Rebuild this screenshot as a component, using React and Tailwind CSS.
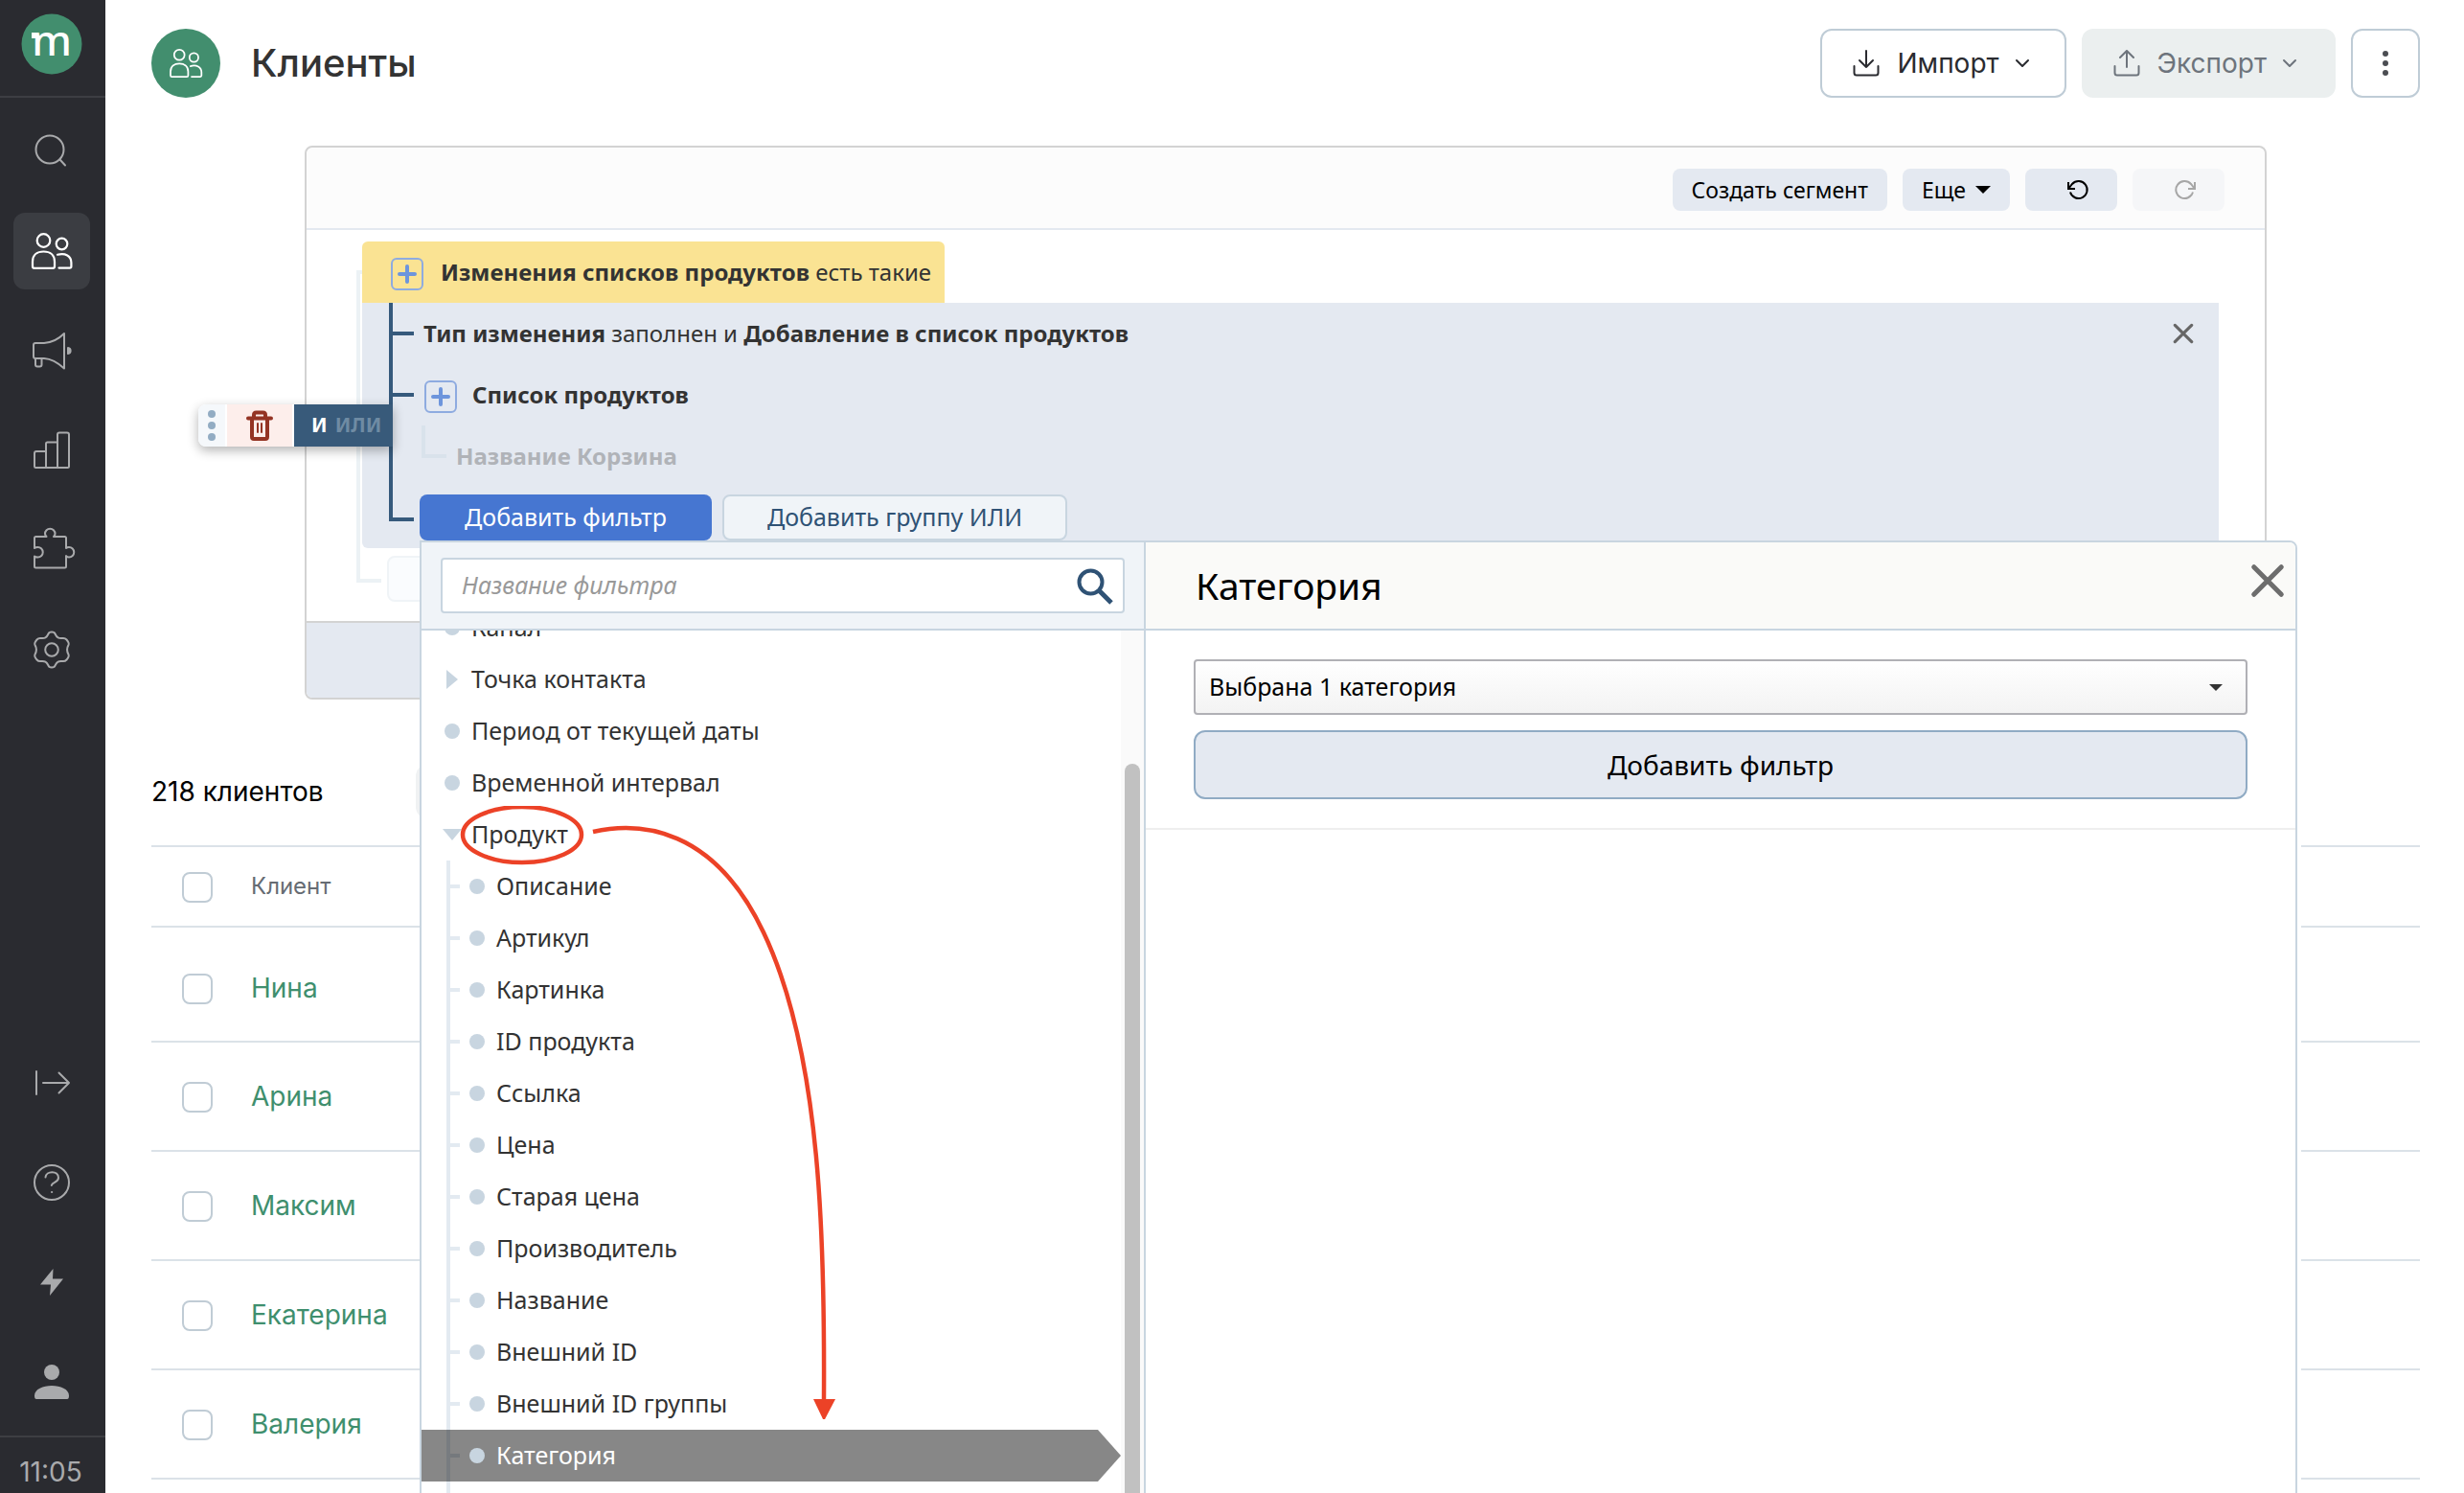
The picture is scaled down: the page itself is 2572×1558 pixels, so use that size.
import { useState } from 'react'

const stroke = {
  fill: 'none',
  stroke: 'currentColor',
  strokeWidth: 2,
  strokeLinecap: 'round',
  strokeLinejoin: 'round',
}

function UsersIcon({ className }) {
  return (
    <svg viewBox="0 0 44 40" className={className} {...stroke} strokeWidth={2.2}>
      <circle cx="13.5" cy="9" r="6.8" />
      <circle cx="32.5" cy="12.5" r="5.8" />
      <path d="M2 36V31C2 24 7 20.5 13.5 20.5S25 24 25 31V36Q25 37.8 23.2 37.8H3.8Q2 37.8 2 36Z" />
      <path d="M28 23.8C36 21.6 42.4 25 42.4 32V36Q42.4 37.6 40.8 37.6H29.5" />
    </svg>
  )
}

function SearchIcon() {
  return (
    <svg viewBox="0 0 40 40" className="size-10" {...stroke}>
      <circle cx="18" cy="18" r="14.5" />
      <path d="M28.5 28.5L34 34.5" />
    </svg>
  )
}

function MegaphoneIcon() {
  return (
    <svg viewBox="0 0 44 40" className="h-10 w-11" {...stroke}>
      <path d="M3 14Q3 12 5 12H14C22 11.5 29 8 35 2V38.500C29 33 22 28.500 14 28H5Q3 28 3 26Z" />
      <path d="M5 28V34.500Q5 36.500 7 36.500H9.500Q11.500 36.500 11.500 34.500V28" />
      <path d="M39 17C42.500 17.500 42.500 22.500 39 23Z" fill="currentColor" />
    </svg>
  )
}

function ChartIcon() {
  return (
    <svg viewBox="0 0 40 40" className="size-10" {...stroke}>
      <path d="M2 37V23Q2 21 4 21H14V13Q14 11.500 15.500 11.500H26V3.500Q26 1.500 28 1.500H36Q38 1.500 38 3.500V36.500Q38 38 36.500 38H3.500Q2 38 2 36.500" />
      <path d="M14 21V38M26 11V38" />
    </svg>
  )
}

function PuzzleIcon() {
  return (
    <svg viewBox="0 2 44 44" className="ml-1 size-11 overflow-visible" {...stroke}>
      <path d="M2 11.500Q2 10 3.500 10H14.500Q13 8.500 13 7A5 5 0 0 1 23.500 7Q23.500 8.500 22 10H33.500Q35 10 35 11.500V22Q36 21 38 21A5 5 0 0 1 38 31.500Q36 31.500 35 30V41Q35 42.500 33.500 42.500H3.500Q2 42.500 2 41V30.500Q3 31.500 5.500 31.500A5 5 0 0 0 5.500 21Q3 21 2 22Z" />
    </svg>
  )
}

function GearIcon() {
  return (
    <svg viewBox="0 0 40 40" className="size-10" {...stroke}>
      <circle cx="20" cy="20" r="6.800" />
      <path d="M16.500 3.500Q17 1.500 20 1.500T23.500 3.500C25.500 7.500 27 8.500 31.500 8Q34 7.800 35.500 9.500Q38.500 13 37.500 15C35.500 18.500 35.500 21.500 37.500 25Q38.500 27 35.500 30.500Q34 32.200 31.500 32C27 31.500 25.500 32.500 23.500 36.500Q23 38.500 20 38.500T16.500 36.500C14.500 32.500 13 31.500 8.500 32Q6 32.200 4.500 30.500Q1.500 27 2.500 25C4.500 21.500 4.500 18.500 2.500 15Q1.500 13 4.500 9.500Q6 7.800 8.500 8C13 8.500 14.500 7.500 16.500 3.500Z" />
    </svg>
  )
}

function ExpandIcon() {
  return (
    <svg viewBox="0 0 40 40" className="size-10" {...stroke}>
      <path d="M4 8V32M11 20H38M27.500 9.500L38 20L27.500 30.500" />
    </svg>
  )
}

function HelpIcon() {
  return (
    <svg viewBox="0 0 40 40" className="size-10" {...stroke}>
      <circle cx="20" cy="20" r="18" />
      <path d="M13.500 14.500C14 7.500 27 7 27 15C27 20 20.500 19.500 19.800 23" />
      <circle cx="20" cy="30" r="0.600" fill="currentColor" strokeWidth={1} />
    </svg>
  )
}

function BoltIcon() {
  return (
    <svg viewBox="0 0 40 40" className="size-10" fill="currentColor">
      <path d="M21.500 6L8 22.500H19L18 34L32 16.500H21Z" />
    </svg>
  )
}

function PersonIcon() {
  return (
    <svg viewBox="0 0 40 40" className="size-10" fill="currentColor">
      <circle cx="20" cy="10" r="8" />
      <path d="M2 34.500C2 27.500 11 24 20 24S38 27.500 38 34.500Q38 38 36 38H4Q2 38 2 34.500Z" />
    </svg>
  )
}

const topNav = [
  { label: 'Поиск', icon: SearchIcon },
  { label: 'Клиенты', icon: UsersIcon, active: true },
  { label: 'Кампании', icon: MegaphoneIcon },
  { label: 'Отчеты', icon: ChartIcon },
  { label: 'Интеграции', icon: PuzzleIcon },
  { label: 'Настройки', icon: GearIcon },
]

const bottomNav = [
  { label: 'Развернуть', icon: ExpandIcon },
  { label: 'Помощь', icon: HelpIcon },
  { label: 'Обновления', icon: BoltIcon },
  { label: 'Профиль', icon: PersonIcon },
]

const rootFilters = [
  { label: 'Канал', marker: 'dot' },
  { label: 'Точка контакта', marker: 'closed' },
  { label: 'Период от текущей даты', marker: 'dot' },
  { label: 'Временной интервал', marker: 'dot' },
  { label: 'Продукт', marker: 'open' },
]

const productFilters = [
  'Описание',
  'Артикул',
  'Картинка',
  'ID продукта',
  'Ссылка',
  'Цена',
  'Старая цена',
  'Производитель',
  'Название',
  'Внешний ID',
  'Внешний ID группы',
  'Категория',
]

const clients = ['Нина', 'Арина', 'Максим', 'Екатерина', 'Валерия']

function NavButton({ item }) {
  const Icon = item.icon
  return (
    <button
      aria-label={item.label}
      className={`flex size-20 items-center justify-center rounded-xl ${
        item.active ? 'bg-[#3b3d42] text-white' : 'text-[#a9aaac]'
      }`}
    >
      <Icon className="h-10 w-11" />
    </button>
  )
}

function Sidebar() {
  return (
    <nav className="flex h-full w-[110px] shrink-0 flex-col bg-[#2a2b30]">
      <div className="flex h-[102px] items-start border-b-2 border-[#3d3e43] pt-[14px] pl-[22px]">
        <svg viewBox="0 0 64 64" className="size-16 overflow-visible" role="img" aria-label="mindbox">
          <circle cx="32" cy="32" r="31.500" fill="#428e6e" />
          <rect x="11" y="20" width="6" height="6" fill="#fff" />
          <text x="32" y="44" textAnchor="middle" fill="#fff" className="font-['Noto_Sans',sans-serif] text-[44px] font-medium">
            m
          </text>
        </svg>
      </div>
      <div className="flex flex-1 flex-col items-start gap-6 pt-4 pl-[14px]">
        {topNav.map((item) => (
          <NavButton key={item.label} item={item} />
        ))}
      </div>
      <div className="flex flex-col items-start gap-6 pb-4 pl-[14px]">
        {bottomNav.map((item) => (
          <NavButton key={item.label} item={item} />
        ))}
      </div>
      <div className="h-[60px] border-t-2 border-[#3d3e43] pt-4 pr-1 text-center text-[28px] leading-10 text-[#a9aaac]">
        11:05
      </div>
    </nav>
  )
}

function Chevron() {
  return (
    <svg viewBox="0 0 16 16" className="size-4" {...stroke}>
      <path d="M2 5L8 11L14 5" />
    </svg>
  )
}

function PageHeader() {
  return (
    <header className="flex items-center gap-4">
      <div className="flex size-[72px] items-center justify-center rounded-full bg-[#428e6e] text-white">
        <UsersIcon className="h-8 w-9" />
      </div>
      <h1 className="ml-4 flex-1 text-[40px] leading-[72px] font-medium text-[#333]">Клиенты</h1>
      <button className="flex h-[72px] items-center rounded-xl border-2 border-[#bfccd6] pr-9 pl-8 text-[28px] text-[#2a2b30]">
        <svg viewBox="0 0 28 28" className="size-7" {...stroke}>
          <path d="M14 1V18M7 11L14 18L21 11M1.500 17V24Q1.500 26.500 4 26.500H24Q26.500 26.500 26.500 24V17" />
        </svg>
        <span className="mr-4 ml-[18px]">Импорт</span>
        <Chevron />
      </button>
      <button disabled className="flex h-[72px] items-center rounded-xl bg-[#ebefef] pr-10 pl-[33px] text-[28px] text-[#6d747c]">
        <svg viewBox="0 0 28 28" className="size-7" {...stroke}>
          <path d="M14 18V1M7 8L14 1L21 8M1.500 17V24Q1.500 26.500 4 26.500H24Q26.500 26.500 26.500 24V17" />
        </svg>
        <span className="mr-4 ml-[18px]">Экспорт</span>
        <Chevron />
      </button>
      <button aria-label="Еще действия" className="flex size-[72px] flex-col items-center justify-center gap-1 rounded-xl border-2 border-[#bfccd6]">
        <span className="size-[6px] rounded-full bg-[#4b4d52]" />
        <span className="size-[6px] rounded-full bg-[#4b4d52]" />
        <span className="size-[6px] rounded-full bg-[#4b4d52]" />
      </button>
    </header>
  )
}

function Toolbar() {
  return (
    <div className="flex justify-end gap-4 rounded-t-lg border-b-2 border-[#e4e9f0] bg-[#fcfcfc] pt-[22px] pr-[42px] pb-[18px] text-[23px] text-black">
      <button className="h-11 rounded-lg bg-[#e4e9f1] px-5">Создать сегмент</button>
      <button className="flex h-11 items-center gap-[10px] rounded-lg bg-[#e4e9f1] px-5">
        Еще
        <svg viewBox="0 0 16 10" className="h-[10px] w-4">
          <path d="M0 1H16L8 9Z" />
        </svg>
      </button>
      <button aria-label="Отменить" className="flex h-11 w-24 items-center justify-center rounded-lg bg-[#e4e9f1] pl-[14px]">
        <UndoIcon />
      </button>
      <button aria-label="Повторить" disabled className="flex h-11 w-24 items-center justify-center rounded-lg bg-[#f5f6f8] pl-[14px] text-[#a6a6a6]">
        <UndoIcon className="-scale-x-100" />
      </button>
    </div>
  )
}

function UndoIcon({ className = '' }) {
  return (
    <svg viewBox="0 0 24 24" className={`size-6 ${className}`} {...stroke} strokeLinecap="butt" strokeLinejoin="miter">
      <path d="M2 4V11H9" />
      <path d="M2.500 10.500L6 6A9 9 0 1 1 4 14.500" />
    </svg>
  )
}

function PlusBox({ className = '' }) {
  return (
    <button
      aria-label="Развернуть условие"
      className={`flex size-[34px] shrink-0 items-center justify-center rounded-md border-2 border-[#8eabe0] text-[#6d95dc] ${className}`}
    >
      <svg viewBox="0 0 20 20" className="size-5" {...stroke} strokeWidth={4}>
        <path d="M10 2V18M2 10H18" />
      </svg>
    </button>
  )
}

function Tick({ className = '' }) {
  return <span className={`h-1 w-[22px] shrink-0 bg-[#365a7c] ${className}`} />
}

function CloseIcon({ className }) {
  return (
    <svg viewBox="0 0 24 24" className={className} {...stroke} strokeWidth={3.4}>
      <path d="M2.500 2.500L21.500 21.500M21.500 2.500L2.500 21.500" />
    </svg>
  )
}

// Floating controls of the hovered group: drag, delete, AND / OR switch
function GroupControls() {
  return (
    <div className="absolute top-[106px] -left-[171px] flex h-11 w-[203px] gap-[2px] overflow-hidden rounded-l-lg bg-white shadow-[0_4px_12px_rgba(0,0,0,0.3)]">
      <div className="flex w-7 flex-col items-center justify-center gap-1 bg-[#f5f8fb]">
        <span className="size-2 rounded-full bg-[#92acc3]" />
        <span className="size-2 rounded-full bg-[#92acc3]" />
        <span className="size-2 rounded-full bg-[#92acc3]" />
      </div>
      <button aria-label="Удалить" className="flex w-[68px] items-center justify-center bg-[#fdeeeb] text-[#943424]">
        <svg viewBox="0 0 28 32" className="h-8 w-7" {...stroke} strokeWidth={4}>
          <path d="M2 8.500H26M8 8V5Q8 2.500 10.500 2.500H17.500Q20 2.500 20 5V8M6 9V28Q6 30 8 30H20Q22 30 22 28V9" />
          <path d="M12 14V23M16 14V23" strokeWidth={2} />
        </svg>
      </button>
      <div className="flex flex-1 items-center gap-2 bg-[#385a7a] pl-[18px] text-[21px] font-bold">
        <button className="text-white">И</button>
        <button className="text-[#6f8ba3]">ИЛИ</button>
      </div>
    </div>
  )
}

function FilterGroup() {
  return (
    <div className="relative rounded-b-md bg-[#e4e9f1] text-[#333]">
      <span className="absolute top-0 left-7 h-[228px] w-1 bg-[#365a7c]" />
      <div className="flex h-16 items-center pr-[26px] pl-8 text-2xl">
        <Tick />
        <p className="ml-[10px] flex-1">
          <b>Тип изменения</b> заполнен и <b>Добавление в список продуктов</b>
        </p>
        <button aria-label="Удалить условие" className="text-[#666]">
          <CloseIcon className="size-[22px]" />
        </button>
      </div>
      <div className="flex h-16 items-center pl-8 text-2xl">
        <Tick />
        <PlusBox className="mt-1 ml-[11px]" />
        <b className="ml-4">Список продуктов</b>
      </div>
      <div className="flex h-16 items-center gap-[10px] pl-[62px] text-2xl">
        <span className="h-[34px] w-[26px] self-start border-b-4 border-l-4 border-[#d9e2eb]" />
        <b className="text-[#b0b3b8]">Название Корзина</b>
      </div>
      <div className="flex h-16 items-center pl-8">
        <Tick className="mt-1" />
        <button className="ml-[6px] h-12 w-[305px] rounded-lg bg-[#4676d1] text-white">Добавить фильтр</button>
        <button className="ml-[11px] h-12 w-[360px] rounded-lg border-2 border-[#c8d5e0] bg-[#f0f4f8] text-[#2f5275]">
          Добавить группу ИЛИ
        </button>
      </div>
      <GroupControls />
    </div>
  )
}

function Marker({ type }) {
  if (type === 'closed') {
    return (
      <svg viewBox="0 0 20 20" className="-ml-[2px] size-5 shrink-0" fill="#c8d5e0">
        <path d="M4 0L16 10L4 20Z" />
      </svg>
    )
  }
  if (type === 'open') {
    return (
      <svg viewBox="0 0 20 20" className="-ml-[2px] size-5 shrink-0" fill="#c8d5e0">
        <path d="M0 4H20L10 16Z" />
      </svg>
    )
  }
  return <span className="mr-[2px] size-4 shrink-0 rounded-full bg-[#c8d5e0]" />
}

function FilterTree({ selected, onSelect }) {
  return (
    <ul className="-mt-[30px] flex-1 text-[#333]">
      {rootFilters.map((f) => (
        <li key={f.label}>
          <button className="flex h-[54px] w-full items-center gap-[10px] pl-6 text-left">
            <Marker type={f.marker} />
            {f.label}
          </button>
        </li>
      ))}
      <li>
        <ul className="relative pb-14">
          <li aria-hidden="true" className="absolute inset-y-0 left-[26px] w-1 bg-[#e3eaf1]" />
          {productFilters.map((name) => {
            const active = name === selected
            return (
              <li key={name} className="relative">
                <button
                  onClick={() => onSelect(name)}
                  className={`flex h-[54px] w-full items-center gap-[10px] pl-[30px] text-left ${
                    active
                      ? 'bg-black/47 text-white [clip-path:polygon(0_0,calc(100%-24px)_0,100%_50%,calc(100%-24px)_100%,0_100%)]'
                      : ''
                  }`}
                >
                  <span className={`h-1 w-[10px] ${active ? 'bg-[#75797d]' : 'bg-[#e3eaf1]'}`} />
                  <Marker />
                  {name}
                </button>
              </li>
            )
          })}
        </ul>
      </li>
    </ul>
  )
}

function Annotation() {
  return (
    <svg viewBox="0 0 460 640" className="pointer-events-none absolute top-[275px] left-0 h-[640px] w-[460px]" fill="none" stroke="#ec4227" strokeWidth="4.5">
      <ellipse cx="105" cy="30" rx="62" ry="29" />
      <path d="M179 27C228 16 305 22 357 132C418 260 421 460 420 620" />
      <path d="M409 619H432L420 642Z" fill="#ec4227" stroke="none" />
    </svg>
  )
}

function FilterPopup() {
  const [selected, setSelected] = useState('Категория')
  return (
    <div className="absolute top-[410px] -right-[34px] left-[118px] z-10 flex h-screen rounded-tr-lg border-2 border-[#c8d5e0] bg-white shadow-[4px_0_0_#fff]">
      <div className="flex w-[756px] shrink-0 flex-col border-r-2 border-[#c8d5e0]">
        <div className="border-b-2 border-[#c8d5e0] bg-[#f0f4f8] px-5 py-4">
          <label className="flex h-[58px] items-center rounded border-2 border-[#c8d5e0] bg-white pr-[10px] pl-5">
            <input
              aria-label="Название фильтра"
              placeholder="Название фильтра"
              className="min-w-0 flex-1 italic outline-none placeholder:text-[#999]"
            />
            <svg viewBox="0 0 40 40" className="size-10 text-[#2f5275]" {...stroke} strokeLinecap="butt">
              <circle cx="16.500" cy="16.500" r="12" strokeWidth={4} />
              <path d="M25 25L38 38" strokeWidth={5} />
            </svg>
          </label>
        </div>
        <div className="flex flex-1 overflow-hidden">
          <FilterTree selected={selected} onSelect={setSelected} />
          <div className="w-6 bg-[#fafafa] pt-[139px] pl-1">
            <div className="h-full w-4 rounded-t-full bg-[#c1c1c1]" />
          </div>
        </div>
      </div>
      <div className="flex-1">
        <div className="flex h-[92px] items-center rounded-tr-md border-b-2 border-[#c8d5e0] bg-[#fafaf8] pr-[11px] pl-[52px]">
          <h2 className="flex-1 text-[39px] text-black">{selected}</h2>
          <button aria-label="Закрыть" className="mb-[10px] text-[#6d6d6d]">
            <CloseIcon className="size-9" />
          </button>
        </div>
        <div className="flex flex-col gap-4 border-b-2 border-[#eee] px-[50px] py-[30px] text-black">
          <div className="relative">
            <select
              aria-label="Категории"
              className="block h-[58px] w-full appearance-none rounded border-2 border-[#b0b0b5] bg-linear-to-b from-white to-[#f3f3f3] px-[14px]"
            >
              <option>Выбрана 1 категория</option>
            </select>
            <svg viewBox="0 0 14 8" className="pointer-events-none absolute top-[26px] right-[26px] h-2 w-[14px]" fill="#333">
              <path d="M0 0H14L7 7Z" />
            </svg>
          </div>
          <button className="h-[72px] rounded-xl border-2 border-[#90abc4] bg-[#e4e9f1] text-[28px]">
            Добавить фильтр
          </button>
        </div>
      </div>
      <Annotation />
    </div>
  )
}

function SegmentBuilder() {
  return (
    <section className="relative mx-40 mt-[50px] rounded-lg border-2 border-[#d3d3d3] font-['Noto_Sans',sans-serif] text-[25px]">
      <Toolbar />
      <div className="relative pt-3 pr-12 pb-5 pl-[58px]">
        <span className="absolute top-[42px] left-[52px] h-[326px] w-[26px] border-y-4 border-l-4 border-[#ecf2f5]" />
        <div className="relative flex h-16 w-[608px] items-center rounded-t-md bg-[#fae393] pl-[30px] text-2xl text-[#333]">
          <PlusBox className="mt-1" />
          <p className="ml-[18px] whitespace-nowrap">
            <b>Изменения списков продуктов</b> есть такие
          </p>
        </div>
        <FilterGroup />
        <div className="mt-2 ml-[26px] h-12 w-80 rounded-lg border-2 border-[#f0f4f7] bg-[#fafcfe]" />
      </div>
      <div className="h-20 rounded-b-md border-t-2 border-[#d3d3d3] bg-[#e4e9f1]" />
      <FilterPopup />
    </section>
  )
}

function Checkbox({ label }) {
  return (
    <input
      type="checkbox"
      aria-label={label}
      className="mt-[2px] block size-8 appearance-none rounded-lg border-2 border-[#c0ccd5] bg-white"
    />
  )
}

function ClientsTable() {
  return (
    <table className="w-full border-collapse text-left">
      <thead>
        <tr className="h-[84px] border-y-2 border-[#dbe2e8]">
          <th className="w-[104px] pl-8">
            <Checkbox label="Выбрать всех" />
          </th>
          <th className="text-2xl font-normal text-[#666c73]">Клиент</th>
        </tr>
      </thead>
      <tbody>
        {clients.map((name, i) => (
          <tr key={name} className={`border-b-2 border-[#dbe2e8] ${i === 0 ? 'h-[120px]' : 'h-[114px]'}`}>
            <td className={`pl-8 ${i === 0 ? 'pt-2' : ''}`}>
              <Checkbox label={name} />
            </td>
            <td className={`text-[28px] ${i === 0 ? 'pt-2' : ''}`}>
              <a href="#client" className="text-[#3f8f6e]">
                {name}
              </a>
            </td>
          </tr>
        ))}
      </tbody>
    </table>
  )
}

export default function App() {
  return (
    <div className="flex h-screen overflow-hidden bg-white font-['Inter',sans-serif]">
      <Sidebar />
      <main className="min-w-0 flex-1 pt-[30px] pr-[46px] pl-12">
        <PageHeader />
        <SegmentBuilder />
        <div className="mt-[68px] mb-7 flex items-center text-[28px] text-black">
          <span className="w-[276px]">218 клиентов</span>
          <div className="h-14 w-60 rounded-xl bg-[#f0f2f3]" />
        </div>
        <ClientsTable />
      </main>
    </div>
  )
}
